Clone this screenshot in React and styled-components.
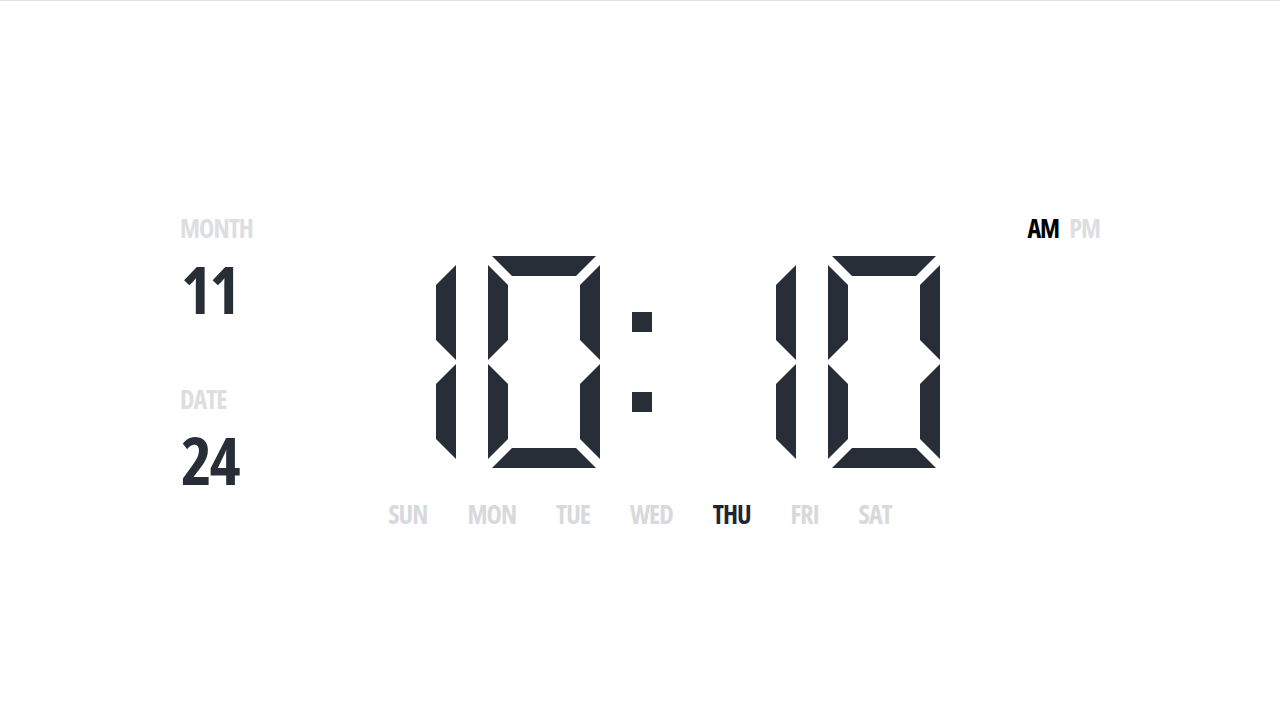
import React from "react";
import styled, { createGlobalStyle } from "styled-components";

const GlobalStyle = createGlobalStyle`
  html, body { margin: 0; padding: 0; background: #ffffff; }
  body { font-family: "Open Sans", "Liberation Sans", sans-serif; }
`;

const Page = styled.div`
  box-sizing: border-box;
  height: 720px;
  border-top: 1px solid #e2e2e2;
  padding-top: 214px;
`;

const Board = styled.div`
  width: 920px;
  margin: 0 auto;
  display: grid;
  grid-template-columns: 164px 596px 160px;
`;

const Condensed = styled.span`
  font-family: "Open Sans", "Liberation Sans", sans-serif;
  font-stretch: 75%;
  font-weight: 700;
  line-height: 1;
  display: block;
  letter-spacing: -1px;
`;

const Side = styled.div`
  display: flex;
  flex-direction: column;
`;

const Label = styled(Condensed)`
  font-size: 26px;
  color: #dddee1;
  margin-top: ${(p) => p.$gap || 0}px;
`;

const Value = styled(Condensed)`
  font-size: 66px;
  color: #282e38;
  letter-spacing: -2.5px;
  margin-top: ${(p) => p.$gap || 0}px;
  margin-left: 1px;
`;

const Center = styled.div`
  display: flex;
  flex-direction: column;
  align-items: center;
  padding-top: 41px;
`;

const Clock = styled.div`
  display: flex;
  gap: 32px;
`;

const DigitSvg = styled.svg`
  width: 112px;
  height: 212px;
  display: block;
  fill: #282e38;
`;

const Colon = styled.div`
  display: flex;
  flex-direction: column;
  gap: 60px;
  padding-top: 56px;
`;

const Dot = styled.div`
  width: 20px;
  height: 20px;
  background: #282e38;
`;

const Days = styled.div`
  display: flex;
  gap: 40px;
  margin-top: 33px;
  margin-left: -4px;
`;

const Day = styled(Condensed)`
  font-size: 26px;
  color: ${(p) => (p.$active ? "#1e2533" : "#d8d9dc")};
`;

const Meridiem = styled.div`
  display: flex;
  justify-content: flex-end;
  gap: 10px;
  align-self: start;
`;

const Mer = styled(Condensed)`
  font-size: 26px;
  color: ${(p) => (p.$active ? "#000000" : "#dddee1")};
`;

const SEGMENTS = {
  a: "4,0 108,0 88,20 24,20",
  b: "112,9 112,104 92,84 92,29",
  c: "112,108 112,203 92,183 92,128",
  d: "4,212 108,212 88,192 24,192",
  e: "0,108 20,128 20,183 0,203",
  f: "0,9 20,29 20,84 0,104",
  g: "22,106 32,96 80,96 90,106 80,116 32,116",
};

const DIGITS = {
  0: "abcdef",
  1: "bc",
  2: "abged",
  3: "abgcd",
  4: "fgbc",
  5: "afgcd",
  6: "afgedc",
  7: "abc",
  8: "abcdefg",
  9: "abcdfg",
};

function Digit({ value }) {
  const on = DIGITS[value];
  return (
    <DigitSvg viewBox="0 0 112 212">
      {on.split("").map((s) => (
        <polygon key={s} points={SEGMENTS[s]} />
      ))}
    </DigitSvg>
  );
}

const DAY_NAMES = ["SUN", "MON", "TUE", "WED", "THU", "FRI", "SAT"];

export default function App() {
  return (
    <>
      <GlobalStyle />
      <Page>
        <Board>
          <Side>
            <Label>MONTH</Label>
            <Value $gap={14}>11</Value>
            <Label $gap={65}>DATE</Label>
            <Value $gap={14}>24</Value>
          </Side>
          <Center>
            <Clock>
              <Digit value={1} />
              <Digit value={0} />
              <Colon>
                <Dot />
                <Dot />
              </Colon>
              <Digit value={1} />
              <Digit value={0} />
            </Clock>
            <Days>
              {DAY_NAMES.map((d) => (
                <Day key={d} $active={d === "THU"}>
                  {d}
                </Day>
              ))}
            </Days>
          </Center>
          <Meridiem>
            <Mer $active>AM</Mer>
            <Mer>PM</Mer>
          </Meridiem>
        </Board>
      </Page>
    </>
  );
}
